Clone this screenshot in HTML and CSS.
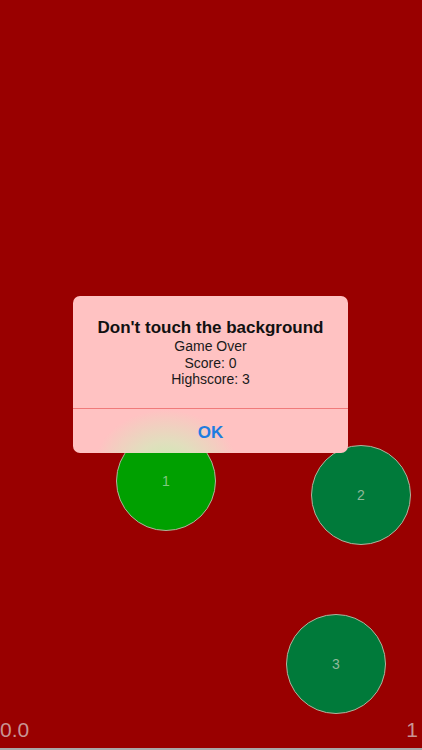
FILE: index.html
```html
<!DOCTYPE html>
<html lang="en">
<head>
    <meta charset="UTF-8">
    <meta name="viewport" content="width=device-width, initial-scale=1.0">
    <title>Don't touch the background</title>
    <link rel="stylesheet" href="styles.css">
</head>
<body>
    <div class="game">
        <div class="field">
            <div class="ball ball-light" style="left: 116px; top: 431px;">1</div>
            <div class="ball" style="left: 311px; top: 445px;">2</div>
            <div class="ball" style="left: 286px; top: 614px;">3</div>

            <div class="alert">
                <div class="alert-body">
                    <h2>Don't touch the background</h2>
                    <p>Game Over</p>
                    <p>Score: 0</p>
                    <p>Highscore: 3</p>
                </div>
                <div class="alert-button">OK</div>
            </div>
        </div>

        <div class="status">
            <span>0.0</span>
            <span>1</span>
        </div>
    </div>
</body>
</html>
```

FILE: styles.css
```css
body {
    margin: 0;
    padding: 0;
    font-family: 'Liberation Sans', Arial, sans-serif;
    background: #990000;
}

.game {
    display: flex;
    flex-direction: column;
    height: 750px;
    background: #990000;
    overflow: hidden;
}

.field {
    position: relative;
    flex: 1;
}

.ball {
    position: absolute;
    width: 100px;
    height: 100px;
    box-sizing: border-box;
    border-radius: 50%;
    border: 1px solid #b4b09c;
    background: #007a3a;
    color: #8fb89a;
    font-size: 14px;
    display: flex;
    align-items: center;
    justify-content: center;
}

.ball-light {
    background: #00a000;
    color: #80c880;
}

.alert {
    position: absolute;
    left: 73px;
    top: 296px;
    width: 275px;
    border-radius: 7px;
    overflow: hidden;
    background: #ffc2c2;
    text-align: center;
    z-index: 2;
}

/* soft glow of the ball sitting under the alert */
.alert::before {
    content: '';
    position: absolute;
    inset: 0;
    background: radial-gradient(ellipse 72px 58px at 93px 172px, rgba(196, 240, 176, 0.95) 0%, rgba(215, 232, 188, 0.75) 45%, rgba(255, 194, 194, 0) 100%);
}

.alert-body {
    position: relative;
    padding: 21px 12px 20px;
    border-bottom: 1px solid #f07a7a;
}

.alert h2 {
    margin: 0;
    font-size: 17px;
    line-height: 21px;
    font-weight: bold;
    color: #111;
}

.alert p {
    margin: 0;
    font-size: 14px;
    line-height: 16.5px;
    color: #1a1a1a;
}

.alert-button {
    position: relative;
    height: 44px;
    line-height: 47px;
    font-size: 17px;
    font-weight: bold;
    color: #1f7de0;
}

.status {
    display: flex;
    justify-content: space-between;
    align-items: flex-start;
    height: 30px;
    padding: 0 4px 0 0;
    border-bottom: 2px solid #a8a8a8;
    color: #c89494;
    font-size: 21px;
    line-height: 24px;
}
```
